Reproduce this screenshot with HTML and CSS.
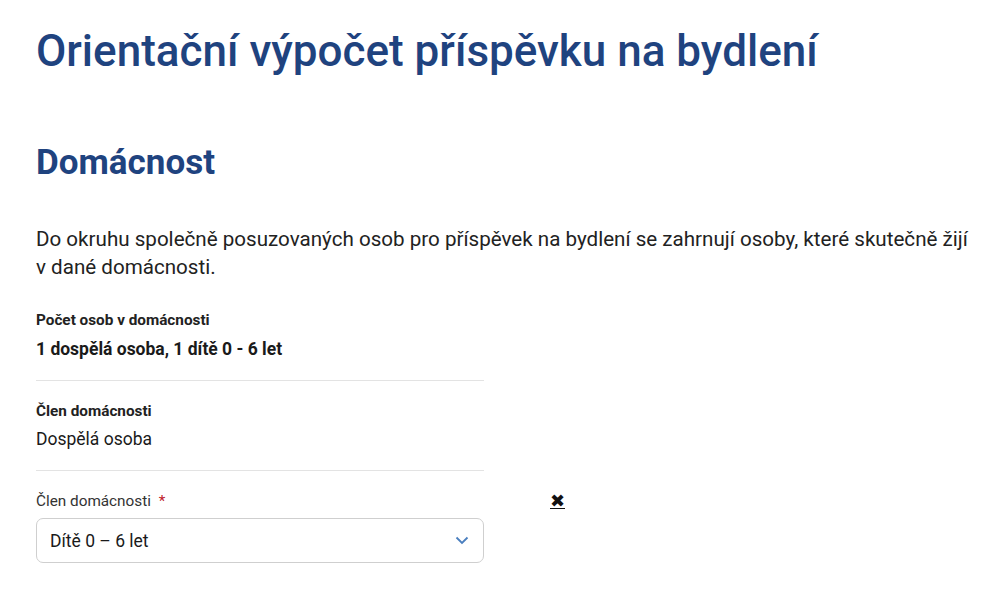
FILE: index.html
```html
<!DOCTYPE html>
<html lang="cs">
<head>
    <meta charset="UTF-8">
    <meta name="viewport" content="width=device-width, initial-scale=1.0">
    <title>Orientační výpočet příspěvku na bydlení</title>
    <link rel="stylesheet" href="styles.css">
</head>
<body>

<div class="page">
    <h1 class="page-title">Orientační výpočet příspěvku na bydlení</h1>

    <!-- Domácnost -->
    <section class="section">
        <h2 class="section-title">Domácnost</h2>
        <p class="intro">Do okruhu společně posuzovaných osob pro příspěvek na bydlení se zahrnují osoby, které skutečně žijí v dané domácnosti.</p>

        <div class="summary">
            <div class="summary-label">Počet osob v domácnosti</div>
            <div class="summary-value">1 dospělá osoba, 1 dítě 0 - 6 let</div>
        </div>

        <div class="member">
            <div class="member-label">Člen domácnosti</div>
            <div class="member-value">Dospělá osoba</div>
        </div>

        <div class="member-edit">
            <div class="field">
                <label for="member-2" class="field-label">Člen domácnosti <span class="required">*</span></label>
                <div class="select-wrap">
                    <select id="member-2" class="select">
                        <option>Dospělá osoba</option>
                        <option selected>Dítě 0 – 6 let</option>
                        <option>Dítě 6 – 15 let</option>
                        <option>Dítě 15 – 26 let</option>
                    </select>
                    <svg class="select-arrow" width="14" height="9" viewBox="0 0 14 9"><path d="M1.5 1.5 L7 7 L12.5 1.5" fill="none" stroke="#4a7fbf" stroke-width="1.8"/></svg>
                </div>
            </div>
            <a href="#" class="remove">&#10006;</a>
        </div>
    </section>
</div>

</body>
</html>
```

FILE: styles.css
```css
body {
    margin: 0;
    font-family: Roboto, "Liberation Sans", sans-serif;
    color: #1a1a1a;
    background: #fff;
}

.page {
    padding: 24px 14px 40px 36px;
}

.page-title {
    margin: 0;
    font-size: 44px;
    font-weight: 500;
    line-height: 54px;
    color: #1f437f;
}

.section {
    margin-top: 64px;
}

.section-title {
    margin: 0;
    font-size: 35px;
    font-weight: 700;
    line-height: 42px;
    color: #1f437f;
}

.intro {
    margin: 41px 0 15px;
    font-size: 20.6px;
    line-height: 28px;
    color: #222;
}

.summary,
.member {
    width: 448px;
    padding: 20px 0 19px;
    border-bottom: 1px solid #e3e3e3;
}

.summary {
    padding-top: 14px;
    padding-bottom: 20px;
}

.summary-label,
.member-label {
    font-size: 15.3px;
    font-weight: 700;
    line-height: 20px;
    color: #222;
}

.summary-value {
    margin-top: 8px;
    font-size: 17.5px;
    font-weight: 700;
    line-height: 22px;
}

.member-value {
    margin-top: 6px;
    font-size: 17.5px;
    line-height: 24px;
}

.member-edit {
    display: flex;
    align-items: flex-start;
    gap: 66px;
    padding-top: 20px;
}

.field {
    width: 448px;
}

.field-label {
    display: block;
    font-size: 15.3px;
    line-height: 20px;
    color: #333;
    margin-bottom: 7px;
}

.required {
    color: #c0202a;
    margin-left: 4px;
}

.select-wrap {
    position: relative;
}

.select {
    width: 100%;
    height: 45px;
    padding: 0 40px 0 13px;
    font-family: inherit;
    font-size: 17.5px;
    color: #1a1a1a;
    background: #fff;
    border: 1px solid #cfcfcf;
    border-radius: 7px;
    appearance: none;
    -webkit-appearance: none;
}

.select-arrow {
    position: absolute;
    right: 15px;
    top: 18px;
    pointer-events: none;
}

.remove {
    font-size: 18px;
    line-height: 20px;
    color: #111;
    text-decoration: underline;
}
```
